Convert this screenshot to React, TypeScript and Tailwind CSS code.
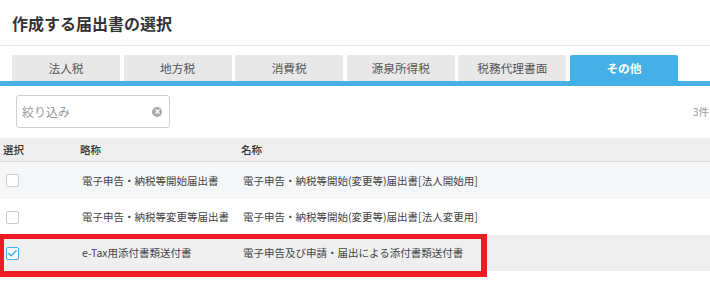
import { Check, X } from 'lucide-react';

const tabs = ['法人税', '地方税', '消費税', '源泉所得税', '税務代理書面', 'その他'];

const rows = [
  { abbr: '電子申告・納税等開始届出書', name: '電子申告・納税等開始(変更等)届出書[法人開始用]', checked: false, bg: 'bg-[#f5f6f7]', h: 'h-[37px]' },
  { abbr: '電子申告・納税等変更等届出書', name: '電子申告・納税等開始(変更等)届出書[法人変更用]', checked: false, bg: 'bg-white', h: 'h-[36px]' },
  { abbr: 'e-Tax用添付書類送付書', name: '電子申告及び申請・届出による添付書類送付書', checked: true, bg: 'bg-[#efefef]', h: 'h-[36px]' },
];

export default function App() {
  return (
    <div className="relative w-[710px] h-[306px] overflow-hidden bg-white text-[#444] font-['Noto_Sans_CJK_JP','Liberation_Sans',sans-serif]">
      {/* Header */}
      <div className="h-[46px] px-3 flex items-center border-b border-[#e6e6e6]">
        <h1 className="text-[16px] font-bold text-[#333]">作成する届出書の選択</h1>
      </div>

      {/* Tabs */}
      <div className="pt-[9px]">
        <div className="flex gap-[3.6px] pl-3 h-[26px]">
          {tabs.map((t, i) => (
            <div
              key={t}
              className={`w-[108px] rounded-t-[2px] flex items-center justify-center text-[11.7px] ${
                i === tabs.length - 1 ? 'bg-[#45b0e5] text-white font-bold' : 'bg-[#e8e8e8] text-[#555]'
              }`}
            >
              {t}
            </div>
          ))}
        </div>
        <div className="h-[5px] bg-[#45b0e5]" />
      </div>

      {/* Filter */}
      <div className="flex items-center justify-between pl-4 pt-[9px] pb-[10px]">
        <div className="w-[154px] h-[33px] border border-[#cfcfcf] rounded-[3px] flex items-center justify-between pl-[5px] pr-[7px]">
          <span className="text-[12px] text-[#999]">絞り込み</span>
          <span className="w-[10px] h-[10px] rounded-full bg-[#aaa] flex items-center justify-center">
            <X className="w-[7px] h-[7px] text-white" strokeWidth={4} />
          </span>
        </div>
        <span className="text-[10.5px] text-[#999] mr-[1px]">3件</span>
      </div>

      {/* Table */}
      <div>
        <div className="h-[24px] flex items-center bg-[#eeeeee] border-b border-[#dcdcdc] text-[10.5px] text-[#333] font-medium">
          <div className="w-[80px] pl-[3px]">選択</div>
          <div className="w-[161px]">略称</div>
          <div className="flex-1">名称</div>
        </div>
        {rows.map((r) => (
          <div key={r.abbr} className={`${r.h} ${r.bg} flex items-center text-[10.5px] text-[#444]`}>
            <div className="w-[82px] pl-[6px]">
              <div
                className={`w-[13px] h-[13px] rounded-[2px] border bg-white flex items-center justify-center ${
                  r.checked ? 'border-[#45b0e5]' : 'border-[#cccccc]'
                }`}
              >
                {r.checked && <Check className="w-[11px] h-[11px] text-[#45b0e5]" strokeWidth={3.5} />}
              </div>
            </div>
            <div className="w-[161px] whitespace-nowrap">{r.abbr}</div>
            <div className="flex-1 whitespace-nowrap">{r.name}</div>
          </div>
        ))}
      </div>

      {/* Highlight annotation */}
      <div className="absolute left-0 top-[234px] w-[487px] h-[43px] border-t-[5px] border-b-[6px] border-l-[4px] border-r-[6px] border-[#ed1c24] pointer-events-none" />
    </div>
  );
}
